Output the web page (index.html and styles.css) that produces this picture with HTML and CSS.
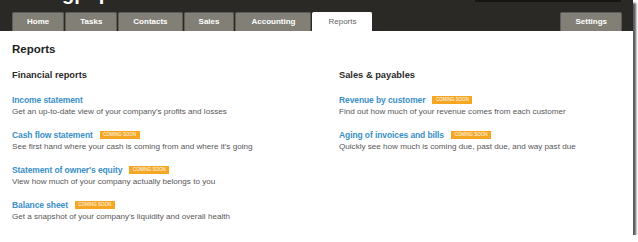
FILE: index.html
```html
<!DOCTYPE html>
<html lang="en">

<head>
	<meta charset="utf-8">
	<meta name="viewport" content="width=device-width, initial-scale=1.0">
	<title>Reports</title>
	<link rel="stylesheet" href="styles.css">
</head>

<body>
	<div class="window">
		<header>
			<div class="topbar">
				<span class="logo">Bigpop</span>
				<span class="search"></span>
			</div>
			<nav>
				<a class="tab">Home</a>
				<a class="tab">Tasks</a>
				<a class="tab">Contacts</a>
				<a class="tab">Sales</a>
				<a class="tab wide">Accounting</a>
				<a class="tab active">Reports</a>
				<a class="tab settings">Settings</a>
			</nav>
		</header>

		<main>
			<h1>Reports</h1>
			<section class="columns">
				<div class="column">
					<h2>Financial reports</h2>
					<article class="report">
						<p class="report_name"><a>Income statement</a></p>
						<p class="report_desc">Get an up-to-date view of your company's profits and losses</p>
					</article>
					<article class="report">
						<p class="report_name"><a>Cash flow statement</a><span class="soon">COMING SOON</span></p>
						<p class="report_desc">See first hand where your cash is coming from and where it's going</p>
					</article>
					<article class="report">
						<p class="report_name"><a>Statement of owner's equity</a><span class="soon">COMING SOON</span></p>
						<p class="report_desc">View how much of your company actually belongs to you</p>
					</article>
					<article class="report">
						<p class="report_name"><a>Balance sheet</a><span class="soon">COMING SOON</span></p>
						<p class="report_desc">Get a snapshot of your company's liquidity and overall health</p>
					</article>
				</div>
				<div class="column">
					<h2>Sales &amp; payables</h2>
					<article class="report">
						<p class="report_name"><a>Revenue by customer</a><span class="soon">COMING SOON</span></p>
						<p class="report_desc">Find out how much of your revenue comes from each customer</p>
					</article>
					<article class="report">
						<p class="report_name"><a>Aging of invoices and bills</a><span class="soon">COMING SOON</span></p>
						<p class="report_desc">Quickly see how much is coming due, past due, and way past due</p>
					</article>
				</div>
			</section>
		</main>
	</div>
</body>

</html>
```

FILE: styles.css
```css
* {
	margin: 0;
	box-sizing: border-box;
}

body {
	background: #fff;
	font-family: "Liberation Sans", Arial, sans-serif;
}

.window {
	width: 633px;
	height: 235px;
	background: #fff;
	overflow: hidden;
	box-shadow: 3px 3px 2px rgba(0, 0, 0, 0.65);
}

header {
	background: #2b2926;
	height: 31px;
	padding: 0 11px 0 12px;
}

.topbar {
	height: 12px;
	display: flex;
	align-items: flex-end;
	overflow: hidden;
}

.logo {
	color: #fff;
	font-weight: bold;
	font-size: 20px;
	line-height: 20px;
	margin: 0 0 9px 30px;
}

.search {
	width: 146px;
	height: 20px;
	margin: 0 1px 10px auto;
	background: #161513;
}

nav {
	display: flex;
	gap: 1px;
	height: 19px;
	align-items: flex-end;
}

.tab {
	height: 19px;
	padding: 0 14px;
	background: #827f76;
	border: 1px solid #5f5d57;
	border-bottom: none;
	border-radius: 2px 2px 0 0;
	color: #fff;
	font-weight: bold;
	font-size: 8px;
	line-height: 18px;
	text-align: center;
}

.wide {
	padding: 0 15px;
}

.active {
	background: #fff;
	border-color: #fff;
	color: #666;
	font-weight: normal;
	padding: 0 15px;
}

.settings {
	margin-left: auto;
}

main {
	padding: 11px 0 0 12px;
}

h1 {
	font-size: 11.5px;
	line-height: 14px;
	color: #1e1e1e;
	margin-bottom: 13px;
}

.columns {
	display: grid;
	grid-template-columns: 327px 1fr;
}

h2 {
	font-size: 9.3px;
	line-height: 12px;
	color: #2a2a2a;
	margin-bottom: 13px;
}

.report {
	margin-bottom: 12px;
}

.report_name {
	display: flex;
	align-items: center;
	height: 12px;
	font-size: 8.5px;
	font-weight: bold;
	letter-spacing: -0.1px;
}

.report_name a {
	color: #3a8fc7;
}

.soon {
	margin-left: 7px;
	width: 40px;
	height: 8px;
	background: #f5a623;
	color: #fff;
	font-size: 4.5px;
	font-weight: normal;
	letter-spacing: 0;
	line-height: 8px;
	text-align: center;
}

.report_desc {
	font-size: 8.1px;
	line-height: 11px;
	color: #585659;
}
```
